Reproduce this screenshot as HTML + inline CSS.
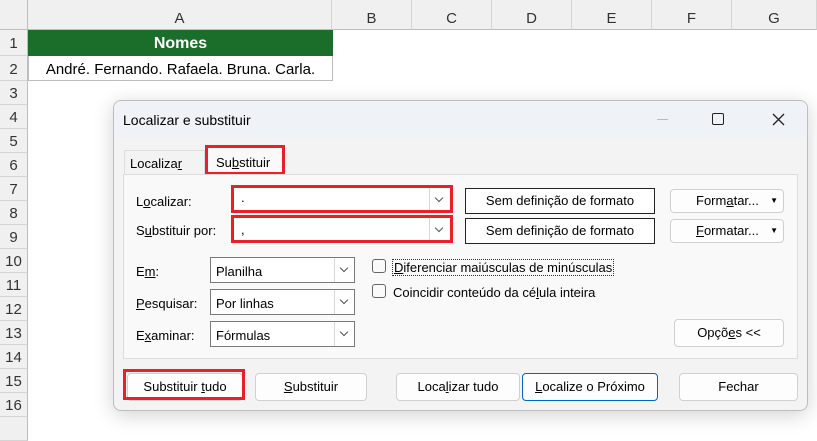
<!DOCTYPE html>
<html><head><meta charset="utf-8"><style>
*{box-sizing:border-box;margin:0;padding:0}
body{width:817px;height:422px;overflow:hidden;background:#fff;font-family:"Liberation Sans",sans-serif;position:relative;font-size:13px;color:#000}
.abs{position:absolute}
.ch{position:absolute;top:0;height:30px;background:#f0f0f0;border-right:1px solid #d4d4d4;border-bottom:1px solid #bdbdbd;text-align:center;line-height:38px;font-size:15px;color:#333}
.rh{position:absolute;left:0;width:28px;background:#f0f0f0;border-bottom:1px solid #d4d4d4;border-right:1px solid #bdbdbd;text-align:center;font-size:15px;color:#333}
.u{text-decoration:underline}
.btn{position:absolute;background:#fdfdfd;border:1px solid #d0d0d0;border-radius:4px;text-align:center;font-size:13px;line-height:26px}
.combo{position:absolute;background:#fff;border:1px solid #7a7a7a;height:26px}
.combo .arr{position:absolute;right:0;top:0;width:20px;height:100%;border-left:1px solid #d6d6d6}
.combo .arr:after{content:"";position:absolute;left:6px;top:7px;width:5px;height:5px;border-right:1px solid #555;border-bottom:1px solid #555;transform:rotate(45deg)}
.lbl{position:absolute;font-size:13px}
.red{position:absolute;border:3px solid #e8202a}
.cb{position:absolute;width:14px;height:14px;border:1px solid #666;border-radius:3px;background:#fafafa}
</style></head><body>
<div class="abs" style="left:0;top:0;width:28px;height:30px;background:#f0f0f0;border-right:1px solid #bdbdbd;border-bottom:1px solid #bdbdbd"></div>
<div class="ch" style="left:28px;width:304px">A</div>
<div class="ch" style="left:332px;width:80px">B</div>
<div class="ch" style="left:412px;width:80px">C</div>
<div class="ch" style="left:492px;width:80px">D</div>
<div class="ch" style="left:572px;width:80px">E</div>
<div class="ch" style="left:652px;width:80px">F</div>
<div class="ch" style="left:732px;width:85px">G</div>
<div class="rh" style="top:30px;height:26px;line-height:28px">1</div>
<div class="rh" style="top:56px;height:25px;line-height:27px">2</div>
<div class="rh" style="top:81px;height:24px;line-height:26px">3</div>
<div class="rh" style="top:105px;height:24px;line-height:26px">4</div>
<div class="rh" style="top:129px;height:24px;line-height:26px">5</div>
<div class="rh" style="top:153px;height:24px;line-height:26px">6</div>
<div class="rh" style="top:177px;height:24px;line-height:26px">7</div>
<div class="rh" style="top:201px;height:24px;line-height:26px">8</div>
<div class="rh" style="top:225px;height:24px;line-height:26px">9</div>
<div class="rh" style="top:249px;height:24px;line-height:26px">10</div>
<div class="rh" style="top:273px;height:24px;line-height:26px">11</div>
<div class="rh" style="top:297px;height:24px;line-height:26px">12</div>
<div class="rh" style="top:321px;height:24px;line-height:26px">13</div>
<div class="rh" style="top:345px;height:24px;line-height:26px">14</div>
<div class="rh" style="top:369px;height:24px;line-height:26px">15</div>
<div class="rh" style="top:393px;height:24px;line-height:26px">16</div>
<div class="rh" style="top:417px;height:24px"></div>
<div class="abs" style="left:28px;top:30px;width:305px;height:26px;background:#1b6e29;color:#fff;font-weight:bold;font-size:16px;text-align:center;line-height:28px">Nomes</div>
<div class="abs" style="left:28px;top:56px;width:305px;height:25px;border:1px solid #bdbdbd;border-top:none;font-size:15px;text-align:center;line-height:27px">André. Fernando. Rafaela. Bruna. Carla.</div>

<div class="abs" style="left:113px;top:100px;width:695px;height:311px;background:#f3f3f3;border:1px solid #bdbdbd;border-radius:8px;box-shadow:0 4px 20px rgba(0,0,0,0.18);overflow:hidden">
 <div class="abs" style="left:0;top:0;width:100%;height:37px;background:#eff2f7"></div>
 <div class="lbl" style="left:9px;top:11px;font-size:14px">Localizar e substituir</div>
 <div class="abs" style="left:543px;top:18px;width:11px;height:1px;background:#bbb"></div>
 <div class="abs" style="left:598px;top:12px;width:12px;height:12px;border:1.5px solid #222;border-radius:2px"></div>
 <svg class="abs" style="left:658px;top:12px" width="13" height="13"><path d="M1 1L12 12M12 1L1 12" stroke="#222" stroke-width="1.3"/></svg>
 <div class="abs" style="left:10px;top:49px;width:81px;height:24px;border:1px solid #ddd;border-bottom:none;background:#f3f3f3"></div>
 <div class="lbl" style="left:16px;top:55px">Localiza<span class="u">r</span></div>
 <div class="abs" style="left:92px;top:46px;width:78px;height:27px;background:#f9f9f9"></div>
 <div class="lbl" style="left:102px;top:54px">Su<span class="u">b</span>stituir</div>
 <div class="red" style="left:91px;top:44px;width:80px;height:30px"></div>
 <div class="abs" style="left:9px;top:73px;width:675px;height:185px;background:#f9f9f9;border:1px solid #dcdcdc"></div>
 <div class="lbl" style="left:22px;top:93px">L<span class="u">o</span>calizar:</div>
 <div class="lbl" style="left:22px;top:122px">S<span class="u">u</span>bstituir por:</div>
 <div class="combo" style="left:120px;top:86px;width:216px;height:24px;border-color:#fff"><div class="arr"></div><span class="abs" style="left:6px;top:2px">.</span></div>
 <div class="combo" style="left:120px;top:116px;width:216px;height:24px;border-color:#fff"><div class="arr"></div><span class="abs" style="left:6px;top:4px">,</span></div>
 <div class="red" style="left:117px;top:84px;width:222px;height:28px"></div>
 <div class="red" style="left:117px;top:114px;width:222px;height:28px"></div>
 <div class="abs" style="left:351px;top:87px;width:190px;height:26px;border:1px solid #222;background:#fff;text-align:center;line-height:24px">Sem definição de formato</div>
 <div class="abs" style="left:351px;top:117px;width:190px;height:26px;border:1px solid #222;background:#fff;text-align:center;line-height:24px">Sem definição de formato</div>
 <div class="btn" style="left:556px;top:88px;width:114px;height:24px;line-height:22px;text-align:left;padding-left:25px">Form<span class="u">a</span>tar...<span class="abs" style="right:5px;top:0;font-size:8px">▼</span></div>
 <div class="btn" style="left:556px;top:118px;width:114px;height:24px;line-height:22px;text-align:left;padding-left:25px"><span class="u">F</span>ormatar...<span class="abs" style="right:5px;top:0;font-size:8px">▼</span></div>
 <div class="lbl" style="left:22px;top:163px">E<span class="u">m</span>:</div>
 <div class="lbl" style="left:22px;top:195px"><span class="u">P</span>esquisar:</div>
 <div class="lbl" style="left:22px;top:227px">E<span class="u">x</span>aminar:</div>
 <div class="combo" style="left:96px;top:156px;width:145px"><div class="arr"></div><span class="abs" style="left:5px;top:6px">Planilha</span></div>
 <div class="combo" style="left:96px;top:188px;width:145px"><div class="arr"></div><span class="abs" style="left:5px;top:6px">Por linhas</span></div>
 <div class="combo" style="left:96px;top:220px;width:145px"><div class="arr"></div><span class="abs" style="left:5px;top:6px">Fórmulas</span></div>
 <div class="cb" style="left:258px;top:158px"></div>
 <div class="cb" style="left:258px;top:183px"></div>
 <div class="lbl" style="left:278px;top:158px;border:1px dotted #333;padding:0 1px"><span class="u">D</span>iferenciar maiúsculas de minúsculas</div>
 <div class="lbl" style="left:279px;top:184px">Coincidir conteúdo da cé<span class="u">l</span>ula inteira</div>
 <div class="btn" style="left:560px;top:218px;width:110px;height:28px">Opçõ<span class="u">e</span>s &lt;&lt;</div>
 <div class="btn" style="left:13px;top:272px;width:116px;height:28px">Substituir <span class="u">t</span>udo</div>
 <div class="red" style="left:9px;top:268px;width:122px;height:31px"></div>
 <div class="btn" style="left:141px;top:272px;width:112px;height:28px"><span class="u">S</span>ubstituir</div>
 <div class="btn" style="left:282px;top:272px;width:124px;height:28px">Loca<span class="u">l</span>izar tudo</div>
 <div class="btn" style="left:408px;top:272px;width:136px;height:28px;border-color:#0067c0"><span class="u">L</span>ocalize o Próximo</div>
 <div class="btn" style="left:565px;top:272px;width:119px;height:28px">Fechar</div>
</div>
</body></html>
